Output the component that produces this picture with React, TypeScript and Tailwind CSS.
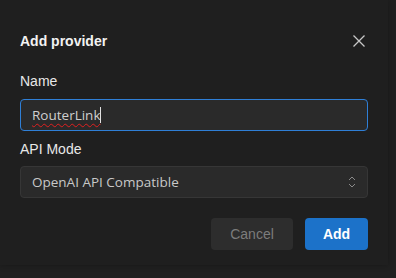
import React from "react";

export default function App() {
  return (
    <div className="w-[396px] h-[278px] bg-[#202020] overflow-hidden" style={{ fontFamily: '"Liberation Sans", Arial, sans-serif' }}>
      <div className="w-[388px] h-[265px] bg-[#1f1f1f] pt-[31px] px-[20px] shadow-[0_0_6px_rgba(0,0,0,0.3)]">
        <div className="flex items-center justify-between h-[20px] w-[348px]">
          <span className="text-[14px] font-bold text-[#f2f2f2]">Add provider</span>
          <svg width="14" height="14" viewBox="0 0 14 14" className="mr-[2px]">
            <path d="M1.5 1.5 L12.5 12.5 M12.5 1.5 L1.5 12.5" stroke="#c8c8c8" strokeWidth="1.3" />
          </svg>
        </div>
        <div className="mt-[20px] text-[14px] text-[#e8e8e8] h-[20px] leading-[20px]">Name</div>
        <div className="mt-[8px] w-[348px] h-[32px] rounded-[4px] border border-[#2f7fd6] bg-[#2a2a2a] flex items-center pl-[11px]">
          <span className="text-[#cfcfcf] underline decoration-wavy decoration-[#e02020] decoration-1 underline-offset-[3px]" style={{ fontFamily: '"Open Sans", sans-serif', fontSize: '13.5px' }}>RouterLink</span>
          <span className="w-px h-[16px] bg-[#e0e0e0]" />
        </div>
        <div className="mt-[8px] text-[14px] text-[#e8e8e8] h-[20px] leading-[20px]">API Mode</div>
        <div className="mt-[7px] w-[348px] h-[32px] rounded-[4px] border border-[#363636] bg-[#2a2a2a] flex items-center justify-between pl-[11px] pr-[10px]">
          <span className="text-[#c8c8c8]" style={{ fontFamily: '"Open Sans", sans-serif', fontSize: '13.5px' }}>OpenAI API Compatible</span>
          <svg width="10" height="14" viewBox="0 0 10 14">
            <path d="M2 5 L5 2 L8 5 M2 9 L5 12 L8 9" stroke="#8a8a8a" strokeWidth="1" fill="none" />
          </svg>
        </div>
        <div className="mt-[20px] flex justify-end gap-[12px] w-[348px]">
          <div className="w-[82px] h-[32px] rounded-[4px] bg-[#2d2d2d] flex items-center justify-center text-[14px] text-[#7c7c7c]">Cancel</div>
          <div className="w-[63px] h-[32px] rounded-[4px] bg-[#1c72c9] flex items-center justify-center text-[14px] font-bold text-white">Add</div>
        </div>
      </div>
    </div>
  );
}
